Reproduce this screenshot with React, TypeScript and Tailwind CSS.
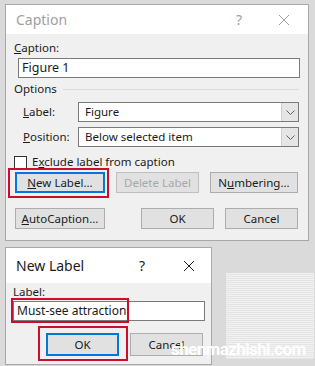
import React from 'react';

const font = { fontFamily: '"Noto Sans", "Open Sans", sans-serif' };

const Btn: React.FC<{ w: string; children: React.ReactNode; disabled?: boolean; focus?: boolean }> = ({ w, children, disabled, focus }) => (
  <div
    className={`${w} h-[21px] flex items-center justify-center text-[11.5px] bg-[#e1e1e1] border ${
      focus ? 'border-2 border-[#0078d7]' : 'border-[#adadad]'
    } ${disabled ? 'text-[#a8a8a8] bg-[#cccccc] border-[#bfbfbf]' : 'text-[#1a1a1a]'}`}
  >
    {children}
  </div>
);

const Combo: React.FC<{ value: string }> = ({ value }) => (
  <div className="flex-1 h-[20px] bg-white border border-[#7a7a7a] flex items-center">
    <span className="flex-1 pl-[6px] text-[11.5px] text-[#1a1a1a]">{value}</span>
    <div className="w-[17px] h-full bg-[#e5e5e5] border-l border-[#cfcfcf] flex items-center justify-center">
      <svg width="9" height="5" viewBox="0 0 9 5">
        <path d="M0.5 0.5 L4.5 4.5 L8.5 0.5" fill="none" stroke="#606060" strokeWidth="1" />
      </svg>
    </div>
  </div>
);

const CloseX: React.FC = () => (
  <svg width="12" height="12" viewBox="0 0 12 12">
    <path d="M1 1 L11 11 M11 1 L1 11" stroke="currentColor" strokeWidth="1" />
  </svg>
);

export default function App() {
  return (
    <div className="relative w-[315px] h-[366px] overflow-hidden bg-[#dadada] pt-[4px]" style={font}>
      {/* Caption dialog */}
      <div className="ml-[5px] w-[304px] h-[237px] border border-[#a8a8a8] bg-[#f0f0f0] flex flex-col">
        <div className="h-[29px] bg-white flex items-center pl-[10px] pr-[18px] text-[#a0a0a0]">
          <span className="text-[14px] flex-1">Caption</span>
          <span className="text-[14px] mr-[36px]">?</span>
          <CloseX />
        </div>
        <div className="px-[8px] pt-[6px] text-[11.5px] text-[#1a1a1a] flex flex-col">
          <div className="h-[16px] leading-[16px]"><span className="underline">C</span>aption:</div>
          <div className="ml-[4px] mt-[2px] w-[282px] h-[20px] bg-white border border-[#7a7a7a] flex items-center pl-[3px] text-[12.5px]">Figure 1</div>
          <div className="mt-[3px] flex items-center h-[16px]">
            <span>Options</span>
            <div className="flex-1 ml-[6px] mr-[1px] h-px bg-[#dcdcdc]" />
          </div>
          <div className="mt-[5px] flex items-center">
            <span className="w-[64px] pl-[9px]"><span className="underline">L</span>abel:</span>
            <div className="flex-1 flex mr-[1px]"><Combo value="Figure" /></div>
          </div>
          <div className="mt-[5px] flex items-center">
            <span className="w-[64px] pl-[9px]"><span className="underline">P</span>osition:</span>
            <div className="flex-1 flex mr-[1px]"><Combo value="Below selected item" /></div>
          </div>
          <div className="mt-[8px] flex items-center h-[14px]">
            <div className="w-[13px] h-[13px] bg-white border border-[#333]" />
            <span className="ml-[5px]">E<span className="underline">x</span>clude label from caption</span>
          </div>
          <div className="mt-[3px] flex items-center pl-[1px]">
            <Btn w="w-[90px]" focus><span><span className="underline">N</span>ew Label...</span></Btn>
            <div className="ml-[11px]"><Btn w="w-[83px]" disabled>Delete Label</Btn></div>
            <div className="ml-[11px]"><Btn w="w-[88px]"><span>N<span className="underline">u</span>mbering...</span></Btn></div>
          </div>
          <div className="mt-[15px] flex items-center pl-[1px]">
            <Btn w="w-[90px]"><span><span className="underline">A</span>utoCaption...</span></Btn>
            <div className="ml-[36px]"><Btn w="w-[73px]">OK</Btn></div>
            <div className="ml-[11px]"><Btn w="w-[73px]">Cancel</Btn></div>
          </div>
        </div>
      </div>

      {/* New Label dialog + dotted backdrop */}
      <div className="mt-[6px] flex">
        <div className="ml-[5px] w-[207px] h-[118px] border border-[#a8a8a8] bg-[#f0f0f0] flex flex-col">
          <div className="h-[35px] bg-white flex items-center pl-[10px] pr-[16px] text-[#1a1a1a]">
            <span className="text-[14px] flex-1">New Label</span>
            <span className="text-[14px] mr-[38px]">?</span>
            <CloseX />
          </div>
          <div className="px-[7px] pt-[1px] text-[11.5px] text-[#1a1a1a] flex flex-col">
            <div className="h-[16px] leading-[16px]">Label:</div>
            <div className="mt-[1px] w-[192px] h-[20px] bg-white border border-[#7a7a7a] flex items-center pl-[3px] text-[12px]">Must-see attraction</div>
            <div className="mt-[12px] flex items-center pl-[33px]">
              <Btn w="w-[73px] h-[23px]" focus>OK</Btn>
              <div className="ml-[11px]"><Btn w="w-[73px] h-[23px]">Cancel</Btn></div>
            </div>
          </div>
        </div>
        <div className="ml-[14px] mt-[26px] w-[88px] h-[86px] bg-[repeating-linear-gradient(0deg,#e4e4e4_0px,#e4e4e4_1px,#f2f2f2_1px,#f2f2f2_2px)]" />
      </div>

      {/* highlight boxes */}
      <div className="absolute left-[8px] top-[168px] w-[101px] h-[30px] border-2 border-[#c8102e]" />
      <div className="absolute left-[11px] top-[298px] w-[118px] h-[25px] border-2 border-[#c8102e]" />
      <div className="absolute left-[38px] top-[326px] w-[90px] h-[35px] border-2 border-[#c8102e]" />

      {/* watermark */}
      <div className="absolute left-[171px] top-[339px] text-white text-[17px] leading-[20px] font-bold tracking-[-0.6px]" style={{ fontFamily: 'Roboto, sans-serif' }}>
        shenmazhishi.com
      </div>
    </div>
  );
}
